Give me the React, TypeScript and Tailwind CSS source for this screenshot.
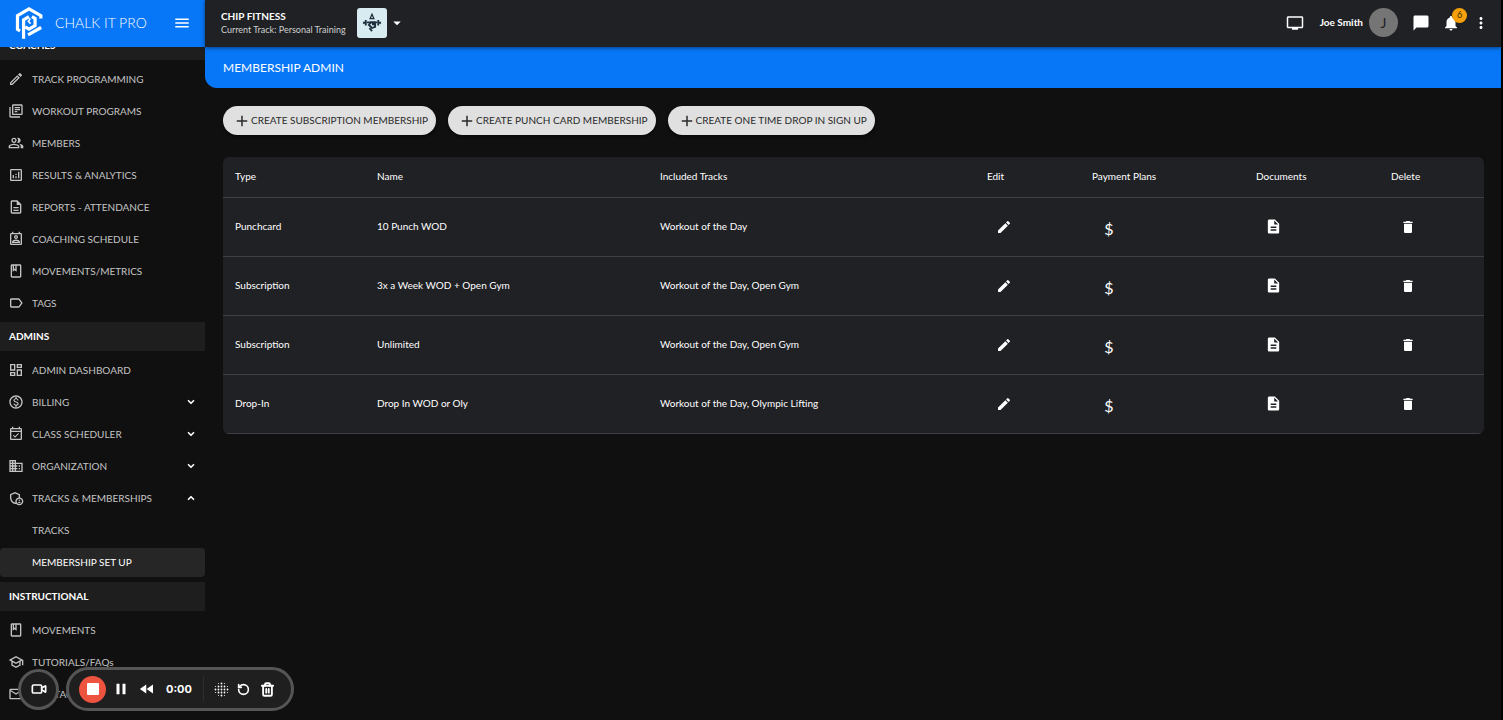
import React from "react";
import clsx from "clsx";
import type { IconType } from "react-icons";
import {
  MdAdd,
  MdArrowDropDown,
  MdChatBubble,
  MdDelete,
  MdDescription,
  MdEdit,
  MdFastRewind,
  MdMenu,
  MdMoreVert,
  MdNotifications,
  MdOutlineAdminPanelSettings,
  MdOutlineAnalytics,
  MdOutlineClass,
  MdOutlineDashboard,
  MdOutlineDescription,
  MdOutlineDomain,
  MdOutlineEventAvailable,
  MdOutlineLabel,
  MdOutlineLibraryBooks,
  MdOutlineMail,
  MdOutlineModeEdit,
  MdOutlineMonetizationOn,
  MdOutlinePeopleAlt,
  MdOutlinePermContactCalendar,
  MdOutlineSchool,
  MdPause,
  MdTv,
} from "react-icons/md";
import { ChevronDown, ChevronUp, RotateCcw, Trash2, Video } from "lucide-react";

interface NavItem {
  label: string;
  icon?: IconType;
  expand?: "open" | "closed";
  active?: boolean;
}

interface NavSection {
  title: string;
  items: NavItem[];
}

const sections: NavSection[] = [
  {
    title: "COACHES",
    items: [
      { label: "TRACK PROGRAMMING", icon: MdOutlineModeEdit },
      { label: "WORKOUT PROGRAMS", icon: MdOutlineLibraryBooks },
      { label: "MEMBERS", icon: MdOutlinePeopleAlt },
      { label: "RESULTS & ANALYTICS", icon: MdOutlineAnalytics },
      { label: "REPORTS - ATTENDANCE", icon: MdOutlineDescription },
      { label: "COACHING SCHEDULE", icon: MdOutlinePermContactCalendar },
      { label: "MOVEMENTS/METRICS", icon: MdOutlineClass },
      { label: "TAGS", icon: MdOutlineLabel },
    ],
  },
  {
    title: "ADMINS",
    items: [
      { label: "ADMIN DASHBOARD", icon: MdOutlineDashboard },
      { label: "BILLING", icon: MdOutlineMonetizationOn, expand: "closed" },
      { label: "CLASS SCHEDULER", icon: MdOutlineEventAvailable, expand: "closed" },
      { label: "ORGANIZATION", icon: MdOutlineDomain, expand: "closed" },
      { label: "TRACKS & MEMBERSHIPS", icon: MdOutlineAdminPanelSettings, expand: "open" },
      { label: "TRACKS" },
      { label: "MEMBERSHIP SET UP", active: true },
    ],
  },
  {
    title: "INSTRUCTIONAL",
    items: [
      { label: "MOVEMENTS", icon: MdOutlineClass },
      { label: "TUTORIALS/FAQs", icon: MdOutlineSchool },
      { label: "CONTACT US", icon: MdOutlineMail },
    ],
  },
];

const memberships = [
  { type: "Punchcard", name: "10 Punch WOD", tracks: "Workout of the Day" },
  { type: "Subscription", name: "3x a Week WOD + Open Gym", tracks: "Workout of the Day, Open Gym" },
  { type: "Subscription", name: "Unlimited", tracks: "Workout of the Day, Open Gym" },
  { type: "Drop-In", name: "Drop In WOD or Oly", tracks: "Workout of the Day, Olympic Lifting" },
];

const createActions = [
  "CREATE SUBSCRIPTION MEMBERSHIP",
  "CREATE PUNCH CARD MEMBERSHIP",
  "CREATE ONE TIME DROP IN SIGN UP",
];

const columns = [
  { title: "Type", width: "w-[11.26%]" },
  { title: "Name", width: "w-[22.44%]" },
  { title: "Included Tracks", width: "w-[25.93%]" },
  { title: "Edit", width: "w-[8.33%]" },
  { title: "Payment Plans", width: "w-[13.01%]" },
  { title: "Documents", width: "w-[10.7%]" },
  { title: "Delete", width: "w-[8.33%]" },
];

function Logo() {
  return (
    <svg viewBox="0 0 84 100" className="h-8 w-7 shrink-0" fill="none" stroke="white" strokeWidth="10">
      <path d="M79 36V27L42 6L6 27V70L14 75" />
      <path d="M25 99V40L42 30" />
      <path d="M39 87L80 64" />
      <path d="M51 30L61 36V58L42 69L30 62" />
      <path d="M46 36L40 45L47 52" strokeWidth="5" />
    </svg>
  );
}

function TrackIcon() {
  return (
    <svg viewBox="0 0 32 32" className="size-5" fill="none" stroke="#1d2d3c" strokeWidth="3">
      <path d="M16 2l-3 7h6z" strokeWidth="2" />
      <path d="M8 15h16M6 11v9M26 11v9M3 14v3M29 14v3" />
      <path d="M22 15h-8l-3 4 5 5 5-2v-4h-5" />
      <path d="M12 24l4 5" />
    </svg>
  );
}

function DotGridIcon() {
  const steps = [-2, -1, 0, 1, 2];
  return (
    <svg viewBox="-7.5 -7.5 15 15" className="size-[15px]" fill="white">
      {steps.map((y) =>
        steps.map((x) => {
          const dist = Math.abs(x) + Math.abs(y);
          return dist < 4 && <circle key={`${x},${y}`} cx={x * 3} cy={y * 3} r={dist < 3 ? 0.9 : 0.5} />;
        })
      )}
    </svg>
  );
}

function Sidebar() {
  return (
    <aside className="flex w-[205px] shrink-0 flex-col">
      <div className="z-10 flex h-[47px] shrink-0 items-center bg-[#0877f7] pb-0.5 pl-[15px] pr-[14px]">
        <Logo />
        <span className="ml-3 flex-1 text-sm font-light">CHALK IT PRO</span>
        <button aria-label="Toggle menu">
          <MdMenu className="size-[18px]" />
        </button>
      </div>
      <nav className="min-h-0 flex-1 overflow-hidden">
        <div className="-mt-4">
          {sections.map((section, i) => (
            <section key={section.title} className={clsx(i === 1 && "pt-[3px]", i === 2 && "pt-1")}>
              <h2 className="flex h-[29px] items-center bg-[#1e1e1e] pl-[9px] text-[10px] font-bold">
                {section.title}
              </h2>
              <ul className="pt-[3px]">
                {section.items.map((item) => (
                  <NavRow key={item.label} item={item} />
                ))}
              </ul>
            </section>
          ))}
        </div>
      </nav>
    </aside>
  );
}

function NavRow({ item }: { item: NavItem }) {
  const Icon = item.icon;
  return (
    <li className="flex h-8 items-center">
      <a
        href="#"
        className={clsx(
          "flex h-[29px] flex-1 items-center gap-2 px-2 text-[10px]",
          item.active ? "rounded bg-[#262626] text-white" : "text-[#c4c4c4]"
        )}
      >
        {Icon ? <Icon className="size-4" /> : <span className="size-4" />}
        <span className="flex-1">{item.label}</span>
        {item.expand === "closed" && <ChevronDown className="mr-px size-2.5 text-white" strokeWidth={4} />}
        {item.expand === "open" && <ChevronUp className="mr-px size-2.5 text-white" strokeWidth={4} />}
      </a>
    </li>
  );
}

function TopBar() {
  return (
    <header className="z-10 flex h-[47px] shrink-0 items-center bg-[#1f2124] pb-0.5 pl-4 pr-[11px] shadow-[0_1px_4px_rgba(0,0,0,0.5)]">
      <div className="flex flex-col">
        <span className="text-[10px] font-bold leading-[14px]">CHIP FITNESS</span>
        <span className="text-[9px] leading-[14px] text-[#d0d0d0]">Current Track: Personal Training</span>
      </div>
      <button className="ml-[11px] flex items-center gap-px" aria-label="Change track">
        <span className="flex size-[30px] items-center justify-center rounded-[3px] bg-[#d8ebf0]">
          <TrackIcon />
        </span>
        <MdArrowDropDown className="size-[18px]" />
      </button>
      <div className="ml-auto flex items-center">
        <button aria-label="Display">
          <MdTv className="size-[18px]" />
        </button>
        <span className="ml-4 text-[10px] font-bold">Joe Smith</span>
        <span className="ml-1.5 flex size-[29px] items-center justify-center rounded-full bg-[#757575] text-sm text-[#202124]">
          J
        </span>
        <button className="ml-3.5" aria-label="Messages">
          <MdChatBubble className="size-[18px]" />
        </button>
        <button className="relative ml-3" aria-label="Notifications">
          <MdNotifications className="size-[18px]" />
          <span className="absolute -top-1.5 left-2.5 flex size-[15px] items-center justify-center rounded-full bg-[#f5a00b] text-[9px] text-[#3b2a08]">
            6
          </span>
        </button>
        <button className="ml-3" aria-label="More">
          <MdMoreVert className="size-[18px]" />
        </button>
      </div>
    </header>
  );
}

function IconCell({ label, children }: { label: string; children: React.ReactNode }) {
  return (
    <td className="px-3">
      <button aria-label={label} className="flex h-8 w-[34px] items-center justify-center">
        {children}
      </button>
    </td>
  );
}

function MembershipTable() {
  return (
    <div className="overflow-hidden rounded-md bg-[#1f2125]">
      <table className="w-full table-fixed text-left text-[10px]">
        <thead>
          <tr className="h-10 border-b border-[#3d3f43]">
            {columns.map((col) => (
              <th key={col.title} className={clsx("px-3 font-normal", col.width)}>
                {col.title}
              </th>
            ))}
          </tr>
        </thead>
        <tbody>
          {memberships.map((m) => (
            <tr key={m.name} className="h-[59px] border-b border-[#3d3f43]">
              <td className="px-3">{m.type}</td>
              <td className="px-3">{m.name}</td>
              <td className="px-3">{m.tracks}</td>
              <IconCell label={`Edit ${m.name}`}>
                <MdEdit className="size-4" />
              </IconCell>
              <IconCell label={`Payment plans for ${m.name}`}>
                <span className="pt-1 text-base leading-4">$</span>
              </IconCell>
              <IconCell label={`Documents for ${m.name}`}>
                <MdDescription className="size-[17px]" />
              </IconCell>
              <IconCell label={`Delete ${m.name}`}>
                <MdDelete className="size-4" />
              </IconCell>
            </tr>
          ))}
        </tbody>
      </table>
    </div>
  );
}

// Floating screen recorder controls, sit above everything in the bottom left
function RecorderBar() {
  return (
    <div className="fixed bottom-[9px] left-[18px] z-20 flex items-center gap-[7px]">
      <button
        aria-label="Camera"
        className="flex size-[41px] items-center justify-center rounded-full border-[3px] border-[#555] bg-[#1d1d1d]"
      >
        <Video className="size-4" strokeWidth={2.5} />
      </button>
      <div className="flex h-11 items-center rounded-full border-[3px] border-[#555] bg-[#1f1f1f] pl-2.5 pr-4">
        <button aria-label="Stop" className="flex size-[27px] items-center justify-center rounded-full bg-[#ee5340]">
          <span className="size-3 rounded-[1px] bg-white" />
        </button>
        <button aria-label="Pause" className="ml-1.5">
          <MdPause className="size-[18px]" />
        </button>
        <button aria-label="Rewind" className="ml-2">
          <MdFastRewind className="size-[18px]" />
        </button>
        <span className="ml-2.5 w-[25px] font-['Inter',sans-serif] text-[11px] font-bold">0:00</span>
        <span className="ml-3 h-6 w-px bg-[#2f2f2f]" />
        <button aria-label="Blur" className="ml-2.5">
          <DotGridIcon />
        </button>
        <button aria-label="Restart" className="ml-2">
          <RotateCcw className="size-[13px]" strokeWidth={3} />
        </button>
        <button aria-label="Discard" className="ml-2.5">
          <Trash2 className="size-[15px]" strokeWidth={3} />
        </button>
      </div>
    </div>
  );
}

export default function App() {
  return (
    <div className="flex h-screen overflow-hidden bg-[#101010] font-['Lato',sans-serif] text-white">
      <Sidebar />
      <div className="flex min-w-0 flex-1 flex-col border-r-2 border-black">
        <TopBar />
        <h1 className="flex h-[41px] shrink-0 items-center rounded-bl-xl bg-[#0877f7] pl-[18px] text-xs">
          MEMBERSHIP ADMIN
        </h1>
        <main className="flex flex-col gap-[22px] py-[18px] pl-[18px] pr-[17px]">
          <div className="flex gap-3">
            {createActions.map((label) => (
              <button
                key={label}
                className="flex h-[29px] items-center rounded-full bg-[#e0e0e0] pl-2.5 pr-2 text-[10px] text-[#2a2a2a] shadow-[0_2px_3px_rgba(0,0,0,0.5)]"
              >
                <MdAdd className="size-[18px]" />
                {label}
              </button>
            ))}
          </div>
          <MembershipTable />
        </main>
      </div>
      <RecorderBar />
    </div>
  );
}
